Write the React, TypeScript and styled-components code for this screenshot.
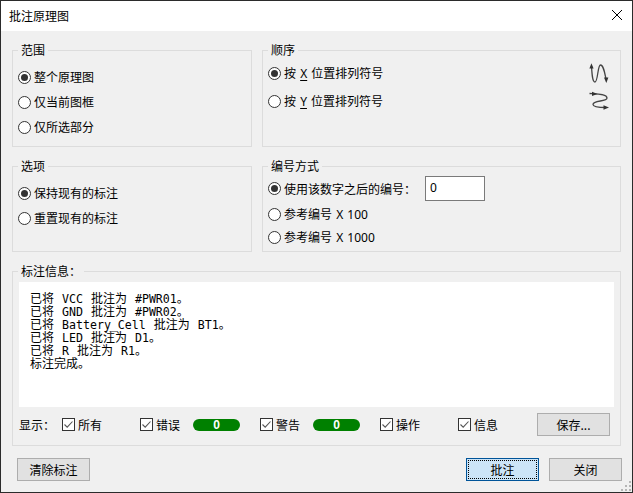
import styled, { createGlobalStyle } from 'styled-components';

const GlobalStyle = createGlobalStyle`
  html,
  body {
    margin: 0;
    padding: 0;
    background: #f0f0f0;
    font-family: 'Noto Sans CJK SC', 'Noto Sans', sans-serif;
    font-size: 12px;
    color: #000;
  }
`;

const Dialog = styled.div`
  position: relative;
  width: 633px;
  height: 493px;
  box-sizing: border-box;
  border: 1px solid #2b2b2b;
  background: #f0f0f0;
  display: flex;
  flex-direction: column;
`;

const TitleBar = styled.div`
  height: 30px;
  background: #fff;
  display: flex;
  align-items: center;
  justify-content: space-between;
  padding: 0 9px 0 8px;
`;

const Title = styled.span`
  line-height: 14px;
`;

const CloseIcon = styled.svg`
  margin-bottom: 2px;
`;

const Content = styled.div`
  display: grid;
  grid-template-columns: 240px 359px;
  grid-template-rows: 97px 86px 175px;
  gap: 19px 10px;
  padding: 19px 0 0 11px;
`;

const Group = styled.div<{ $wide?: boolean }>`
  position: relative;
  box-sizing: border-box;
  border: 1px solid #dcdcdc;
  grid-column: ${(p) => (p.$wide ? '1 / 3' : 'auto')};
`;

const Legend = styled.span`
  position: absolute;
  top: -8px;
  left: 5px;
  padding: 0 3px;
  background: #f0f0f0;
  line-height: 14px;
`;

const Stack = styled.div<{ $top: number; $gap: number }>`
  display: flex;
  flex-direction: column;
  gap: ${(p) => p.$gap}px;
  padding: ${(p) => p.$top}px 11px 0 5px;
`;

const Row = styled.div<{ $height?: number }>`
  display: flex;
  align-items: center;
  justify-content: space-between;
  height: ${(p) => (p.$height ? `${p.$height}px` : 'auto')};
`;

const Choice = styled.label`
  display: flex;
  align-items: center;
  gap: 3px;
  line-height: 14px;
  white-space: pre;
`;

const RadioCircle = styled.span<{ $on?: boolean }>`
  width: 13px;
  height: 13px;
  box-sizing: border-box;
  border: 1px solid #333;
  border-radius: 50%;
  background: #fff;
  display: flex;
  align-items: center;
  justify-content: center;
  &::after {
    content: '';
    display: ${(p) => (p.$on ? 'block' : 'none')};
    width: 7px;
    height: 7px;
    border-radius: 50%;
    background: #333;
  }
`;

const Latin = styled.span`
  font-family: 'Noto Sans', sans-serif;
  word-spacing: 1px;
`;

const Underlined = styled.span`
  text-decoration: underline;
  text-underline-offset: 2px;
`;

const NumberInput = styled.div`
  width: 60px;
  height: 25px;
  box-sizing: border-box;
  border: 1px solid #7a7a7a;
  background: #fff;
  padding-left: 4px;
  font-family: 'Noto Sans', sans-serif;
  line-height: 21px;
  margin-left: 9px;
  color: #000;
`;

const NumberRow = styled.div`
  display: flex;
  align-items: center;
  height: 25px;
`;

const LogBox = styled.div`
  margin: 10px 0 0 6px;
  width: 595px;
  height: 125px;
  box-sizing: border-box;
  background: #fff;
  padding: 9px 0 0 11px;
`;

const LogLine = styled.div`
  height: 13px;
  line-height: 13px;
  white-space: pre;
`;

const Mono = styled.span`
  font-family: 'DejaVu Sans Mono', monospace;
  font-size: 11.6px;
  word-spacing: 1px;
`;

const DisplayRow = styled.div`
  display: flex;
  align-items: center;
  margin: 6px 0 0 6px;
  height: 23px;
`;

const DisplayLabel = styled.span`
  width: 43px;
  line-height: 14px;
`;

const FilterItem = styled.div<{ $width: number }>`
  width: ${(p) => p.$width}px;
  display: flex;
  align-items: center;
`;

const CheckBoxLabel = styled.label`
  display: flex;
  align-items: center;
  gap: 3px;
  line-height: 14px;
`;

const CheckSquare = styled.span`
  width: 13px;
  height: 13px;
  box-sizing: border-box;
  border: 1px solid #333;
  background: #fff;
  display: flex;
`;

const CountPill = styled.span`
  margin-left: 13px;
  width: 47px;
  height: 12px;
  border-radius: 6px;
  background: #008000;
  color: #fff;
  font-family: 'Liberation Sans', sans-serif;
  font-size: 12px;
  font-weight: 700;
  line-height: 12px;
  text-align: center;
`;

const PushButton = styled.button<{ $primary?: boolean }>`
  position: relative;
  width: 73px;
  height: 23px;
  box-sizing: border-box;
  padding: 0;
  border: 1px solid ${(p) => (p.$primary ? '#005499' : '#adadad')};
  background: ${(p) => (p.$primary ? '#cce4f7' : '#e1e1e1')};
  color: #000;
  font: inherit;
  line-height: 20px;
  outline: ${(p) => (p.$primary ? '1px dotted #000' : 'none')};
  outline-offset: ${(p) => (p.$primary ? '-3px' : '0')};
`;

const Footer = styled.div`
  display: flex;
  justify-content: space-between;
  align-items: center;
  margin-top: 12px;
  padding: 0 10px 0 16px;
`;

const FooterRight = styled.div`
  display: flex;
  gap: 10px;
`;

const Grip = styled.svg`
  position: absolute;
  right: 0;
  bottom: 0;
`;

const Radio = ({ on, children }: { on?: boolean; children: React.ReactNode }) => (
  <Choice>
    <RadioCircle $on={on} />
    {children}
  </Choice>
);

const Check = ({ children }: { children: React.ReactNode }) => (
  <CheckBoxLabel>
    <CheckSquare>
      <svg width="11" height="11" viewBox="0 0 11 11">
        <path d="M1.5 5.5 L4.2 8.2 L9.5 2.5" fill="none" stroke="#555" strokeWidth="1.1" />
      </svg>
    </CheckSquare>
    {children}
  </CheckBoxLabel>
);

const ColumnsIcon = () => (
  <svg width="20" height="20" viewBox="0 0 20 20">
    <path
      d="M2.5 3 C3 12 3.5 19 6 19 C9 19 8.5 2 11.5 2 C14.5 2 15.5 9 17 16"
      fill="none"
      stroke="#444"
      strokeWidth="1.3"
    />
    <path d="M2.4 0.3 L4.6 5.5 L0.4 5.5 Z" fill="#333" />
    <path d="M17.3 20 L15 14.5 L19.4 14.5 Z" fill="#333" />
  </svg>
);

const RowsIcon = () => (
  <svg width="20" height="20" viewBox="0 0 20 20">
    <path
      d="M0.5 2.5 C8 3 18 3 18 7 C18 11 4 9 4 13.5 C4 16.5 12 16.5 17 16.5"
      fill="none"
      stroke="#444"
      strokeWidth="1.3"
    />
    <path d="M8.5 2.9 L3 0.8 L3 5 Z" fill="#333" />
    <path d="M20 16.5 L14.5 14.3 L14.5 18.7 Z" fill="#333" />
  </svg>
);

const logLines: [string, string, string, string][] = [
  ['已将', ' VCC ', '批注为', ' #PWR01'],
  ['已将', ' GND ', '批注为', ' #PWR02'],
  ['已将', ' Battery_Cell ', '批注为', ' BT1'],
  ['已将', ' LED ', '批注为', ' D1'],
  ['已将', ' R ', '批注为', ' R1'],
];

const App = () => (
  <>
    <GlobalStyle />
    <Dialog>
      <TitleBar>
        <Title>批注原理图</Title>
        <CloseIcon width="12" height="12" viewBox="0 0 12 12">
          <path d="M1 1 L11 11 M11 1 L1 11" stroke="#000" strokeWidth="1" />
        </CloseIcon>
      </TitleBar>
      <Content>
        <Group>
          <Legend>范围</Legend>
          <Stack $top={19} $gap={11}>
            <Radio on>整个原理图</Radio>
            <Radio>仅当前图框</Radio>
            <Radio>仅所选部分</Radio>
          </Stack>
        </Group>
        <Group>
          <Legend>顺序</Legend>
          <Stack $top={12} $gap={8}>
            <Row>
              <Radio on>
                <span>
                  按
                  <Latin>
                    {' '}
                    <Underlined>X</Underlined>{' '}
                  </Latin>
                  位置排列符号
                </span>
              </Radio>
              <ColumnsIcon />
            </Row>
            <Row>
              <Radio>
                <span>
                  按
                  <Latin>
                    {' '}
                    <Underlined>Y</Underlined>{' '}
                  </Latin>
                  位置排列符号
                </span>
              </Radio>
              <RowsIcon />
            </Row>
          </Stack>
        </Group>
        <Group>
          <Legend>选项</Legend>
          <Stack $top={19} $gap={11}>
            <Radio on>保持现有的标注</Radio>
            <Radio>重置现有的标注</Radio>
          </Stack>
        </Group>
        <Group>
          <Legend>编号方式</Legend>
          <Stack $top={9} $gap={0}>
            <NumberRow>
              <Radio on>使用该数字之后的编号：</Radio>
              <NumberInput>0</NumberInput>
            </NumberRow>
            <Row $height={26}>
              <Radio>
                <span>
                  参考编号<Latin> X 100</Latin>
                </span>
              </Radio>
            </Row>
            <Row $height={21}>
              <Radio>
                <span>
                  参考编号<Latin> X 1000</Latin>
                </span>
              </Radio>
            </Row>
          </Stack>
        </Group>
        <Group $wide>
          <Legend>标注信息：</Legend>
          <LogBox>
            {logLines.map((line, index) => (
              <LogLine key={index}>
                {line[0]}
                <Mono>{line[1]}</Mono>
                {line[2]}
                <Mono>{line[3]}</Mono>。
              </LogLine>
            ))}
            <LogLine>标注完成。</LogLine>
          </LogBox>
          <DisplayRow>
            <DisplayLabel>显示：</DisplayLabel>
            <FilterItem $width={78}>
              <Check>所有</Check>
            </FilterItem>
            <FilterItem $width={120}>
              <Check>错误</Check>
              <CountPill>0</CountPill>
            </FilterItem>
            <FilterItem $width={120}>
              <Check>警告</Check>
              <CountPill>0</CountPill>
            </FilterItem>
            <FilterItem $width={78}>
              <Check>操作</Check>
            </FilterItem>
            <FilterItem $width={79}>
              <Check>信息</Check>
            </FilterItem>
            <PushButton>保存...</PushButton>
          </DisplayRow>
        </Group>
      </Content>
      <Footer>
        <PushButton>清除标注</PushButton>
        <FooterRight>
          <PushButton $primary>批注</PushButton>
          <PushButton>关闭</PushButton>
        </FooterRight>
      </Footer>
      <Grip width="11" height="11" viewBox="0 0 11 11">
        <path d="M8 0h2v2H8z M8 4h2v2H8z M4 4h2v2H4z M8 8h2v2H8z M4 8h2v2H4z M0 8h2v2H0z" fill="#b5b5b5" />
      </Grip>
    </Dialog>
  </>
);

export default App;
